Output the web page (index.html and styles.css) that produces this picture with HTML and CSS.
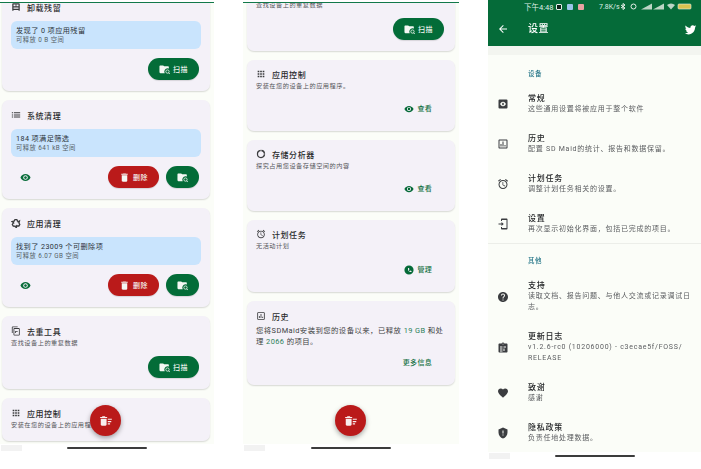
FILE: index.html
```html
<!DOCTYPE html>
<html lang="zh-CN">
<head>
<meta charset="utf-8">
<title>SD Maid</title>
<link rel="stylesheet" href="styles.css">
</head>
<body>
<svg class="defs" width="0" height="0" aria-hidden="true">
  <symbol id="i-eye" viewBox="0 0 24 24"><path d="M12 4.500C7 4.500 2.730 7.610 1 12c1.730 4.390 6 7.500 11 7.500s9.270-3.110 11-7.500c-1.730-4.390-6-7.500-11-7.500zM12 17c-2.760 0-5-2.240-5-5s2.240-5 5-5 5 2.240 5 5-2.240 5-5 5zm0-8c-1.660 0-3 1.340-3 3s1.340 3 3 3 3-1.340 3-3-1.340-3-3-3z"/></symbol>
  <symbol id="i-del" viewBox="0 0 24 24"><path d="M6 19c0 1.100.9 2 2 2h8c1.100 0 2-.9 2-2V7H6v12zM19 4h-3.500l-1-1h-5l-1 1H5v2h14V4z"/></symbol>
  <symbol id="i-scan" viewBox="0 0 24 24"><path d="M9 3H3C1.900 3 1 3.900 1 5v13c0 1.100.9 2 2 2h9.500a7 7 0 0 1 6-10.500c1 0 2 .2 3 .7V7c0-1.100-.9-2-2-2h-8z"/><circle cx="18.500" cy="16.500" r="3.600" fill="none" stroke="currentColor" stroke-width="1.700"/><path d="M21 19.200l2.500 2.800" stroke="currentColor" stroke-width="2" fill="none"/></symbol>
  <symbol id="i-list" viewBox="0 0 24 24"><path d="M2 13h3v-2.500H2V13zm0 5h3v-2.500H2V18zm0-10h3V5.500H2V8zm5 5h15v-2.500H7V13zm0 5h15v-2.500H7V18zM7 5.500V8h15V5.500H7z"/></symbol>
  <symbol id="i-recycle" viewBox="0 0 24 24"><g><path d="M6.500 9l3-5h4.500l2.500 4.500" fill="none" stroke="currentColor" stroke-width="3.200"/><path d="M13 9.500l8 2 1.500-7.500z"/></g><g transform="rotate(120 12 13)"><path d="M6.500 9l3-5h4.500l2.500 4.500" fill="none" stroke="currentColor" stroke-width="3.200"/><path d="M13 9.500l8 2 1.500-7.500z"/></g><g transform="rotate(240 12 13)"><path d="M6.500 9l3-5h4.500l2.500 4.500" fill="none" stroke="currentColor" stroke-width="3.200"/><path d="M13 9.500l8 2 1.500-7.500z"/></g></symbol>
  <symbol id="i-copy" viewBox="0 0 24 24"><path d="M16 1H4c-1.100 0-2 .9-2 2v14h2V3h12V1zm3 4H8c-1.100 0-2 .9-2 2v14c0 1.100.9 2 2 2h11c1.100 0 2-.9 2-2V7c0-1.100-.9-2-2-2zm0 16H8V7h11v14zM10 12h6v2h-4v3h-2z"/></symbol>
  <symbol id="i-apps" viewBox="0 0 24 24"><path d="M4 8h4V4H4v4zm6 12h4v-4h-4v4zm-6 0h4v-4H4v4zm0-6h4v-4H4v4zm6 0h4v-4h-4v4zm6-10v4h4V4h-4zm-6 4h4V4h-4v4zm6 6h4v-4h-4v4zm0 6h4v-4h-4v4z"/></symbol>
  <symbol id="i-donut" viewBox="0 0 24 24"><path d="M11.200 2v3.200a6.900 6.900 0 1 0 7.600 7.600H22A10 10 0 1 1 11.200 2zM12.800 2A10 10 0 0 1 22 11.200h-3.200a6.900 6.900 0 0 0-6-6z"/></symbol>
  <symbol id="i-alarm" viewBox="0 0 24 24"><path d="M22 5.720l-4.600-3.860-1.290 1.530 4.600 3.860L22 5.720zM7.880 3.390L6.600 1.860 2 5.710l1.290 1.530 4.590-3.850zM12.500 8H11v6l4.750 2.850.75-1.230-4-2.370V8zM12 4c-4.970 0-9 4.030-9 9s4.020 9 9 9c4.970 0 9-4.030 9-9s-4.030-9-9-9zm0 16c-3.870 0-7-3.130-7-7s3.130-7 7-7 7 3.130 7 7-3.130 7-7 7z"/></symbol>
  <symbol id="i-clock" viewBox="0 0 24 24"><path fill-rule="evenodd" d="M12 1a11 11 0 1 0 0 22 11 11 0 0 0 0-22zM10 7h2l1 4-1.500 1.200c.5 1.300 1.200 2 2.300 2.500L15 13l3 1.500V17c-5 .5-10-4.500-8-10z"/></symbol>
  <symbol id="i-chart" viewBox="0 0 24 24"><path d="M19 3H5c-1.100 0-2 .9-2 2v14c0 1.100.9 2 2 2h14c1.100 0 2-.9 2-2V5c0-1.100-.9-2-2-2zm0 16H5V5h14v14zM7 12h2v5H7zm4-5h2v10h-2zm4 7h2v3h-2z"/></symbol>
  <symbol id="i-box" viewBox="0 0 24 24"><path fill-rule="evenodd" d="M5 3h14a2 2 0 0 1 2 2v16h-3v-2H6v2H3V5a2 2 0 0 1 2-2zm1 3v4h5V6zm7 0v4h5V6zM6 13v3h12v-3z"/></symbol>
  <symbol id="i-sweep" viewBox="0 0 24 24"><path d="M15 16h4v2h-4zm0-8h7v2h-7zm0 4h6v2h-6zM3 18c0 1.100.9 2 2 2h6c1.100 0 2-.9 2-2V8H3v10zM14 5h-3l-1-1H6L5 5H2v2h12z"/></symbol>
  <symbol id="i-back" viewBox="0 0 24 24"><path d="M20 11H7.830l5.590-5.590L12 4l-8 8 8 8 1.410-1.410L7.830 13H20v-2z"/></symbol>
  <symbol id="i-twitter" viewBox="0 0 24 24"><path d="M22.460 6c-.77.35-1.600.58-2.460.69.88-.53 1.560-1.370 1.880-2.380-.83.5-1.750.85-2.720 1.050C18.370 4.500 17.260 4 16 4c-2.350 0-4.270 1.920-4.270 4.290 0 .34.04.67.11.98C8.280 9.090 5.110 7.380 3 4.790c-.37.63-.58 1.370-.58 2.150 0 1.490.75 2.810 1.910 3.560-.71 0-1.370-.2-1.950-.5v.03c0 2.080 1.480 3.820 3.440 4.210a4.220 4.220 0 0 1-1.930.07 4.280 4.280 0 0 0 4 2.980 8.521 8.521 0 0 1-5.330 1.840c-.34 0-.68-.02-1.020-.06C3.440 20.290 5.700 21 8.120 21 16 21 20.330 14.460 20.330 8.790c0-.19 0-.37-.01-.56.84-.6 1.560-1.360 2.140-2.230z"/></symbol>
  <symbol id="i-gear" viewBox="0 0 24 24"><path fill-rule="evenodd" d="M5 3h14a2 2 0 0 1 2 2v14a2 2 0 0 1-2 2H5a2 2 0 0 1-2-2V5a2 2 0 0 1 2-2zm7 3.500l-1.200 2.100-2.400 0L7.200 10.700 6 12l1.200 1.300 1.200 2.100 2.400 0L12 17.500l1.200-2.100 2.400 0 1.200-2.100L18 12l-1.200-1.300-1.200-2.100-2.400 0zM12 10a2 2 0 1 1 0 4 2 2 0 0 1 0-4z"/></symbol>
  <symbol id="i-phone" viewBox="0 0 24 24"><path d="M10 1h9c1.100 0 2 .9 2 2v18c0 1.100-.9 2-2 2h-9c-1.100 0-2-.9-2-2v-3h2v2h9V4h-9v2H8V3c0-1.100.9-2 2-2zM3 11h6V8l4.500 4L9 16v-3H3z"/></symbol>
  <symbol id="i-help" viewBox="0 0 24 24"><path d="M12 2C6.480 2 2 6.480 2 12s4.480 10 10 10 10-4.480 10-10S17.520 2 12 2zm1 17h-2v-2h2v2zm2.070-7.750l-.9.92C13.450 12.900 13 13.500 13 15h-2v-.5c0-1.100.45-2.100 1.170-2.830l1.240-1.260c.37-.36.59-.86.59-1.410 0-1.100-.9-2-2-2s-2 .9-2 2H8c0-2.210 1.790-4 4-4s4 1.790 4 4c0 .88-.36 1.680-.93 2.250z"/></symbol>
  <symbol id="i-clip" viewBox="0 0 24 24"><path fill-rule="evenodd" d="M19 3h-4.180C14.400 1.840 13.300 1 12 1c-1.300 0-2.400.84-2.820 2H5c-1.100 0-2 .9-2 2v14c0 1.100.9 2 2 2h14c1.100 0 2-.9 2-2V5c0-1.100-.9-2-2-2zm-7 0a1 1 0 1 1 0 2 1 1 0 0 1 0-2zM6 9v2h5V9zm7 0v2h5V9zm-7 4v2h5v-2zm7 0v5h2v-5zM6 17v2h5v-2z"/></symbol>
  <symbol id="i-heart" viewBox="0 0 24 24"><path d="M12 21.350l-1.450-1.320C5.400 15.360 2 12.280 2 8.500 2 5.420 4.420 3 7.500 3c1.740 0 3.410.81 4.500 2.090C13.090 3.810 14.760 3 16.500 3 19.580 3 22 5.420 22 8.500c0 3.780-3.400 6.860-8.550 11.540L12 21.350z"/></symbol>
  <symbol id="i-shield" viewBox="0 0 24 24"><path fill-rule="evenodd" d="M12 1L3 5v6c0 5.550 3.840 10.740 9 12 5.160-1.260 9-6.450 9-12V5l-9-4zm-1 6h2v6h-2zm0 8h2v2h-2z"/></symbol>
</svg>

<main class="desktop">

  <section class="pane pane-one">
    <div class="topline"></div>
    <div class="scroll">
      <article class="card first-one">
        <h2 class="title"><svg class="ti"><use href="#i-box"/></svg>卸载残留</h2>
        <div class="info"><p class="info-main">发现了 0 项应用残留</p><p class="info-sub">可释放 0 B 空间</p></div>
        <div class="actions"><button class="btn green"><svg class="bi"><use href="#i-scan"/></svg>扫描</button></div>
      </article>
      <article class="card">
        <h2 class="title"><svg class="ti"><use href="#i-list"/></svg>系统清理</h2>
        <div class="info"><p class="info-main">184 项满足筛选</p><p class="info-sub">可释放 641 kB 空间</p></div>
        <div class="actions"><svg class="eye"><use href="#i-eye"/></svg><button class="btn red"><svg class="bi"><use href="#i-del"/></svg>删除</button><button class="btn green icon"><svg class="bi"><use href="#i-scan"/></svg></button></div>
      </article>
      <article class="card">
        <h2 class="title"><svg class="ti"><use href="#i-recycle"/></svg>应用清理</h2>
        <div class="info"><p class="info-main">找到了 23009 个可删除项</p><p class="info-sub">可释放 6.07 GB 空间</p></div>
        <div class="actions"><svg class="eye"><use href="#i-eye"/></svg><button class="btn red"><svg class="bi"><use href="#i-del"/></svg>删除</button><button class="btn green icon"><svg class="bi"><use href="#i-scan"/></svg></button></div>
      </article>
      <article class="card">
        <h2 class="title"><svg class="ti"><use href="#i-copy"/></svg>去重工具</h2>
        <p class="desc">查找设备上的重复数据</p>
        <div class="actions tool"><button class="btn green"><svg class="bi"><use href="#i-scan"/></svg>扫描</button></div>
      </article>
      <article class="card">
        <h2 class="title"><svg class="ti"><use href="#i-apps"/></svg>应用控制</h2>
        <p class="desc">安装在您的设备上的应用程序。</p>
      </article>
    </div>
    <button class="fab"><svg class="fab-i"><use href="#i-sweep"/></svg></button>
    <div class="navzone"><span class="stamp"></span><span class="homebar"></span></div>
  </section>

  <section class="pane pane-two">
    <div class="topline"></div>
    <div class="scroll">
      <article class="card first-two">
        <p class="desc">查找设备上的重复数据</p>
        <div class="actions tool"><button class="btn green"><svg class="bi"><use href="#i-scan"/></svg>扫描</button></div>
      </article>
      <article class="card tall">
        <div><h2 class="title"><svg class="ti"><use href="#i-apps"/></svg>应用控制</h2><p class="desc">安装在您的设备上的应用程序。</p></div>
        <div class="link-row"><a class="link"><svg class="li"><use href="#i-eye"/></svg>查看</a></div>
      </article>
      <article class="card tall">
        <div><h2 class="title"><svg class="ti"><use href="#i-donut"/></svg>存储分析器</h2><p class="desc">探究占用您设备存储空间的内容</p></div>
        <div class="link-row"><a class="link"><svg class="li"><use href="#i-eye"/></svg>查看</a></div>
      </article>
      <article class="card tall tall-more">
        <div><h2 class="title"><svg class="ti"><use href="#i-alarm"/></svg>计划任务</h2><p class="desc">无活动计划</p></div>
        <div class="link-row"><a class="link"><svg class="li"><use href="#i-clock"/></svg>管理</a></div>
      </article>
      <article class="card history">
        <div><h2 class="title"><svg class="ti"><use href="#i-chart"/></svg>历史</h2>
        <p class="body">您将SDMaid安装到您的设备以来，已释放 <em>19 GB</em> 和处理 <em>2066</em> 的项目。</p></div>
        <div class="link-row"><a class="link">更多信息</a></div>
      </article>
    </div>
    <button class="fab"><svg class="fab-i"><use href="#i-sweep"/></svg></button>
    <div class="navzone"><span class="stamp"></span><span class="homebar"></span></div>
  </section>

  <section class="pane pane-three">
    <header class="appbar">
      <div class="status"><span class="time">下午4:48</span><span class="dots"><i class="d1"></i><i class="d2"></i><i class="d3"></i></span><span class="speed">7.8K/s</span>
        <svg class="sys" viewBox="0 0 72 7" width="72" height="7">
          <path class="sys-l" d="M1 2l4 3-2 1.500V.5l2 1.500-4 3"/>
          <circle class="sys-l" cx="13.500" cy="3.500" r="2.500"/>
          <path class="sys-m" d="M21 6.500h11V.5z"/>
          <path class="sys-m" d="M33 6.500h11V.5z"/>
          <path class="sys-m" d="M47 2a6 6 0 0 1 8 0l-4 4.500z"/>
          <rect class="sys-b" x="58" y="1" width="13" height="5" rx="1"/>
        </svg>
      </div>
      <div class="bar"><svg class="back"><use href="#i-back"/></svg><h1>设置</h1><svg class="tw"><use href="#i-twitter"/></svg></div>
    </header>
    <div class="band"></div>
    <div class="settings">
      <h3 class="section">设备</h3>
      <div class="item"><svg class="si"><use href="#i-gear"/></svg><div><h4>常规</h4><p>这些通用设置将被应用于整个软件</p></div></div>
      <div class="item"><svg class="si"><use href="#i-chart"/></svg><div><h4>历史</h4><p>配置 SD Maid的统计、报告和数据保留。</p></div></div>
      <div class="item"><svg class="si"><use href="#i-alarm"/></svg><div><h4>计划任务</h4><p>调整计划任务相关的设置。</p></div></div>
      <div class="item"><svg class="si"><use href="#i-phone"/></svg><div><h4>设置</h4><p>再次显示初始化界面，包括已完成的项目。</p></div></div>
      <div class="divider"></div>
      <h3 class="section">其他</h3>
      <div class="item"><svg class="si"><use href="#i-help"/></svg><div><h4>支持</h4><p>读取文档、报告问题、与他人交流或记录调试日志。</p></div></div>
      <div class="item"><svg class="si"><use href="#i-clip"/></svg><div><h4>更新日志</h4><p>v1.2.6-rc0 (10206000) - c3ecae5f/FOSS/<br>RELEASE</p></div></div>
      <div class="item"><svg class="si"><use href="#i-heart"/></svg><div><h4>致谢</h4><p>感谢</p></div></div>
      <div class="item"><svg class="si"><use href="#i-shield"/></svg><div><h4>隐私政策</h4><p>负责任地处理数据。</p></div></div>
    </div>
    <div class="navzone"><span class="stamp"></span><span class="homebar"></span></div>
  </section>

</main>
</body>
</html>
```

FILE: styles.css
```css
* { box-sizing: border-box; margin: 0; padding: 0; }
html, body { width: 701px; height: 469px; overflow: hidden; background: #fff; }
body { font-family: Roboto, "Noto Sans CJK SC", sans-serif; color: #1b1c1b; }
.defs { position: absolute; }
svg { fill: currentColor; display: block; flex: none; }

.desktop { display: flex; gap: 29px; height: 469px; filter: blur(.3px); }
.pane { position: relative; display: flex; flex-direction: column; height: 469px; }
.pane-one { width: 214px; }
.pane-two { width: 216px; }
.pane-three { width: 213px; }

.topline { height: 3px; border-bottom: 1px solid #12794a; background: #fff; flex: none; }
.scroll { height: 441px; overflow: hidden; background: #fbfdf8; display: flex; flex-direction: column; gap: 9px; flex: none; }
.pane-one .scroll { padding: 0 4px 0 2px; }
.pane-two .scroll { padding: 0 4px; }

.card { flex: none; background: #f4f1f8; border-radius: 7px; padding: 8px 9px 11px; box-shadow: 0 1px 1.500px rgba(0, 0, 0, .14); }
.first-one { margin-top: -11px; }
.first-two { margin-top: -7px; padding-top: 7px; height: 55px; }
.title { display: flex; align-items: center; gap: 6px; height: 14px; font-size: 8px; font-weight: 500; letter-spacing: .55px; color: #2a2b2c; }
.ti { width: 10px; height: 10px; color: #3a3b3d; }

.info { margin-top: 7px; height: 28px; border-radius: 6px; background: #c9e4fd; padding: 5px 5px 0; }
.info-main { font-size: 7.200px; line-height: 10px; letter-spacing: .4px; color: #2c3338; }
.info-sub { font-size: 6.300px; line-height: 9px; letter-spacing: .45px; color: #565f66; }

.actions { margin-top: 9px; display: flex; align-items: center; justify-content: flex-end; gap: 7px; height: 22px; margin-right: 2px; }
.actions.tool { margin-top: 8px; }
.eye { width: 11px; height: 11px; color: #0b6e3c; margin-right: auto; margin-left: 9px; }
.btn { display: flex; align-items: center; justify-content: center; gap: 3px; width: 51px; height: 22px; border: 0; border-radius: 11px; font-family: inherit; font-size: 7px; font-weight: 500; letter-spacing: .5px; color: #f4f8f4; box-shadow: 0 1px 1px rgba(0, 0, 0, .12); }
.btn.green { background: #036c38; }
.btn.red { background: #ba1a1a; }
.btn.icon { width: 33px; }
.bi { width: 11px; height: 11px; }

.desc { font-size: 6.200px; line-height: 10px; letter-spacing: .5px; color: #54565a; }
.first-two .desc { margin-top: -3px; }

.tall { height: 71px; display: flex; flex-direction: column; justify-content: space-between; padding-top: 7px; padding-bottom: 17px; }
.tall-more { height: 72px; }
.link-row { display: flex; justify-content: flex-end; padding-right: 14px; }
.link { display: flex; align-items: center; gap: 3px; font-size: 7px; line-height: 10px; font-weight: 500; letter-spacing: .3px; color: #167145; }
.li { width: 10px; height: 10px; color: #056a38; }

.history { height: 84px; display: flex; flex-direction: column; justify-content: space-between; padding-bottom: 17px; }
.body { font-size: 7.400px; line-height: 11px; letter-spacing: .42px; color: #3d3f42; margin-top: 2px; }
.body em { font-style: normal; color: #2c8059; }

.fab { position: absolute; left: 90px; top: 405px; width: 31px; height: 31px; border: 0; border-radius: 50%; background: #ba1a1a; color: #f8eeee; display: flex; align-items: center; justify-content: center; box-shadow: 0 2px 5px rgba(0, 0, 0, .35); }
.pane-two .fab { left: 92px; }
.fab-i { width: 14px; height: 14px; }

.navzone { position: relative; display: flex; justify-content: center; padding-top: 3px; flex: none; }
.homebar { display: block; width: 80px; height: 2px; border-radius: 1px; background: #3c3c3c; }
.stamp { position: absolute; left: 1px; top: 1px; width: 21px; height: 6px; background: #ececec; opacity: .7; }

.appbar { background: #056b39; color: #fff; height: 46px; flex: none; }
.status { display: flex; align-items: center; height: 13px; padding: 0 9px 0 36px; font-size: 6.500px; color: #dfeee5; }
.time { font-size: 7.500px; width: 32px; white-space: nowrap; }
.dots { display: flex; gap: 5px; }
.dots i { display: block; width: 6px; height: 6px; border-radius: 1px; }
.d1 { background: #10231a; border: 1px solid #e6f0ea; }
.d2 { background: #9bc4e8; }
.d3 { background: #e7a3a3; }
.speed { margin-left: 15px; font-size: 7px; }
.sys { margin-left: auto; }
.sys-l { fill: none; stroke: #e6f0ea; stroke-width: 1; }
.sys-m { fill: #bcd5c6; }
.sys-b { fill: #d9c24f; stroke: #e6f0ea; stroke-width: .6; }
.bar { display: flex; align-items: center; height: 32px; padding: 0 4px 0 9px; }
.back { width: 12px; height: 12px; }
.bar h1 { font-size: 10px; font-weight: 500; letter-spacing: .6px; margin-left: 19px; line-height: 32px; }
.tw { width: 13px; height: 13px; margin-left: auto; }

.band { height: 9px; background: #f3f5f0; flex: none; }
.settings { height: 397px; flex: none; background: #fbfdf8; overflow: hidden; padding-top: 2px; }
.section { font-size: 6.500px; font-weight: 500; line-height: 10px; letter-spacing: .5px; color: #1f7285; padding: 12px 0 5px 40px; height: 27px; }
.item { display: flex; align-items: center; padding: 9px 0 9px 9px; }
.si { width: 12px; height: 12px; color: #3b3d40; margin-right: 19px; }
.item h4 { font-size: 8px; line-height: 11px; font-weight: 500; letter-spacing: .75px; color: #222426; }
.item p { font-size: 7px; line-height: 11px; letter-spacing: .75px; color: #5a5c5f; width: 170px; }
.divider { height: 1px; background: #eceee9; margin-top: -1px; }
```
